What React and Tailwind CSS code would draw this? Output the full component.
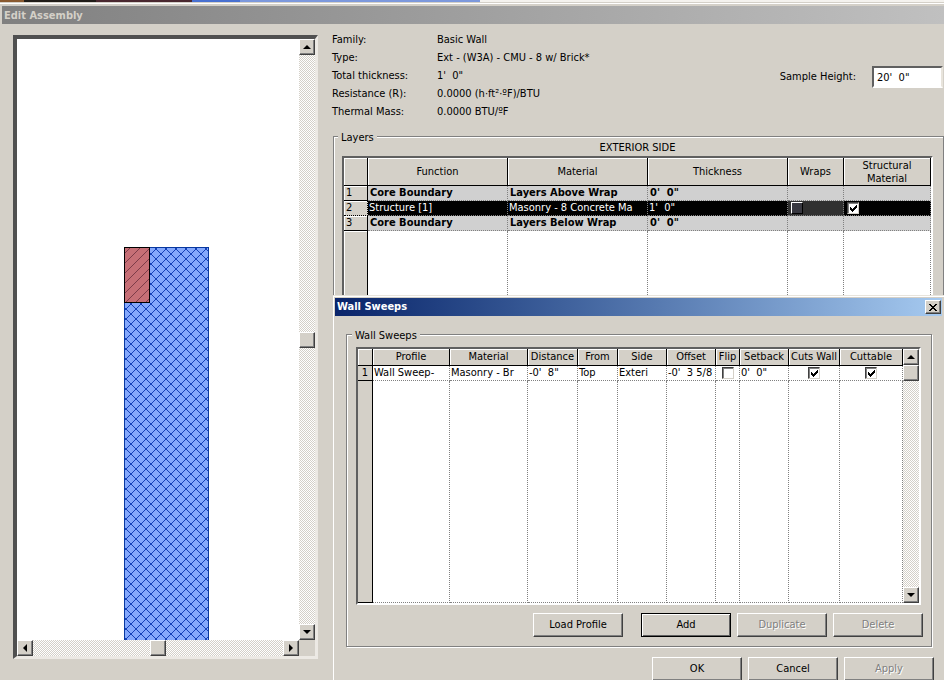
import { useState } from 'react';
import clsx from 'clsx';

const layerColumns = [
  { name: 'Function', width: 'w-[140px]' },
  { name: 'Material', width: 'w-auto' },
  { name: 'Thickness', width: 'w-[140px]' },
  { name: 'Wraps', width: 'w-[56px]' },
  { name: 'Structural Material', width: 'w-[87px]' },
];

const layers = [
  { id: 1, fn: 'Core Boundary', material: 'Layers Above Wrap', thickness: '0\'  0"', boundary: true },
  { id: 2, fn: 'Structure [1]', material: 'Masonry - 8 Concrete Ma', thickness: '1\'  0"', boundary: false },
  { id: 3, fn: 'Core Boundary', material: 'Layers Below Wrap', thickness: '0\'  0"', boundary: true },
];

const sweepColumns = [
  { name: 'Profile', width: 'w-auto' },
  { name: 'Material', width: 'w-[78px]' },
  { name: 'Distance', width: 'w-[50px]' },
  { name: 'From', width: 'w-[40px]' },
  { name: 'Side', width: 'w-[49px]' },
  { name: 'Offset', width: 'w-[49px]' },
  { name: 'Flip', width: 'w-[24px]' },
  { name: 'Setback', width: 'w-[49px]' },
  { name: 'Cuts Wall', width: 'w-[51px]' },
  { name: 'Cuttable', width: 'w-[63px]' },
];

const properties = [
  ['Family:', 'Basic Wall'],
  ['Type:', 'Ext - (W3A) - CMU - 8 w/ Brick*'],
  ['Total thickness:', '1\'  0"'],
  ['Resistance (R):', '0.0000 (h·ft²·ºF)/BTU'],
  ['Thermal Mass:', '0.0000 BTU/ºF'],
];

const raised =
  'bg-[#d4d0c8] border border-t-white border-l-white border-r-[#404040] border-b-[#404040] shadow-[inset_-1px_-1px_0_#808080]';

const sunken =
  'border-2 border-t-[#606060] border-l-[#606060] border-r-white border-b-white';

const headCell =
  'border-r border-b border-black p-0 font-normal shadow-[inset_1px_1px_0_#ffffff]';

const bodyCell = 'border-r border-b border-dotted border-[#808080] p-0';

const arrows = {
  up: 'M4 0L8 4H0z',
  down: 'M0 0H8L4 4z',
  left: 'M4 0V8L0 4z',
  right: 'M0 0L4 4L0 8z',
};

const ArrowButton = ({ dir }) => {
  const vertical = dir === 'up' || dir === 'down';
  return (
    <button type="button" aria-label={`Scroll ${dir}`} className={clsx('flex h-4 w-4 shrink-0 items-center justify-center', raised)}>
      <svg width={vertical ? 8 : 4} height={vertical ? 4 : 8} aria-hidden="true">
        <path d={arrows[dir]} />
      </svg>
    </button>
  );
};

const track = 'bg-[repeating-conic-gradient(#ffffff_0_25%,#d4d0c8_0_50%)] bg-[length:2px_2px]';

const Thumb = () => <div className={clsx('h-4 w-4 shrink-0', raised)} />;

const CheckBox = ({ label, defaultChecked = false, dark = false }) => {
  const [checked, setChecked] = useState(defaultChecked);
  return (
    <span className="relative inline-block h-3 w-3 align-top">
      <input
        type="checkbox"
        aria-label={label}
        checked={checked}
        onChange={(e) => setChecked(e.target.checked)}
        className={clsx(
          'block h-3 w-3 appearance-none border',
          dark
            ? 'border-t-white border-l-white border-r-black border-b-black bg-[#383840]'
            : 'border-t-[#404040] border-l-[#404040] border-r-[#d4d0c8] border-b-[#d4d0c8] bg-white shadow-[inset_1px_1px_0_#808080]'
        )}
      />
      {checked && (
        <svg className="pointer-events-none absolute top-0 left-0" width="12" height="12" shapeRendering="crispEdges" aria-hidden="true">
          <path d="M3 5h1v3h-1zM4 6h1v3h-1zM5 7h1v3h-1zM6 6h1v3h-1zM7 5h1v3h-1zM8 4h1v3h-1zM9 3h1v3h-1z" />
        </svg>
      )}
    </span>
  );
};

const PushButton = ({ children, disabled, isDefault }) => (
  <button
    type="button"
    disabled={disabled}
    className={clsx(
      'h-6 w-[90px]',
      isDefault
        ? 'border border-black bg-[#d4d0c8] shadow-[inset_1px_1px_0_#ffffff,inset_-1px_-1px_0_#606060]'
        : raised,
      disabled && 'text-[#808080] [text-shadow:1px_1px_0_#ffffff]'
    )}
  >
    {children}
  </button>
);

const GroupBox = ({ title, className, children }) => (
  <fieldset
    className={clsx(
      'border border-[#808080] shadow-[inset_1px_1px_0_#ffffff,1px_1px_0_#ffffff]',
      className
    )}
  >
    <legend className="-ml-1 bg-[#d4d0c8] px-[3px] pt-[3px] leading-[10px]">{title}</legend>
    {children}
  </fieldset>
);

// Section view of the wall: CMU body with a brick sweep at the top left
const WallPreview = () => (
  <svg
    className="block h-full min-h-0 w-full min-w-0 bg-white"
    viewBox="0 0 282 601"
    preserveAspectRatio="xMidYMax slice"
    shapeRendering="crispEdges"
    role="img"
    aria-label="Wall section"
  >
    <defs>
      <pattern id="cmu" width="10" height="10" patternUnits="userSpaceOnUse" patternTransform="translate(4 5)">
        <rect width="10" height="10" fill="#84a8fc" />
        <path d="M-1 -1L11 11M11 -1L-1 11" stroke="#1440b8" />
      </pattern>
      <pattern id="brick" width="10" height="10" patternUnits="userSpaceOnUse" patternTransform="translate(0 2)">
        <rect width="10" height="10" fill="#c66f76" />
        <path d="M11 -1L-1 11" stroke="#7c3c48" />
      </pattern>
    </defs>
    <rect x="107.5" y="208.5" width="84" height="400" fill="url(#cmu)" stroke="#0838a0" />
    <rect x="107.5" y="208.5" width="25" height="55" fill="url(#brick)" stroke="#000000" />
  </svg>
);

const PreviewPanel = () => (
  <div className="flex w-[305px] shrink-0 border-4 border-t-[#505050] border-l-[#505050] border-r-[#ece9e4] border-b-[#ece9e4] border-r-[3px] border-b-[3px]">
    <div className="flex min-w-0 flex-1 flex-col">
      <div className="min-h-0 flex-1">
        <WallPreview />
      </div>
      <div className={clsx('flex h-4 shrink-0 justify-between', track)}>
        <ArrowButton dir="left" />
        <Thumb />
        <ArrowButton dir="right" />
      </div>
    </div>
    <div className="flex flex-col bg-[#d4d0c8]">
      <div className={clsx('flex flex-1 flex-col justify-between', track)}>
        <ArrowButton dir="up" />
        <Thumb />
        <ArrowButton dir="down" />
      </div>
      <div className="h-4 w-4" />
    </div>
  </div>
);

const LayersTable = () => (
  <table className="w-full table-fixed border-separate border-spacing-0 bg-white text-left">
    <colgroup>
      <col className="w-[24px]" />
      {layerColumns.map((col) => (
        <col key={col.name} className={col.width} />
      ))}
    </colgroup>
    <thead className="bg-[#d4d0c8]">
      <tr className="h-7 text-center leading-[13px]">
        <th className={headCell} aria-label="Row" />
        {layerColumns.map((col) => (
          <th key={col.name} className={clsx(headCell, 'px-3')}>{col.name}</th>
        ))}
      </tr>
    </thead>
    <tbody className="leading-[14px] whitespace-pre">
      {layers.map((layer) => {
        const selected = !layer.boundary;
        const cell = clsx(bodyCell, 'h-[15px] overflow-hidden', layer.boundary ? 'pl-[2px] font-bold' : 'pl-px');
        return (
          <tr key={layer.id} className={selected ? 'bg-black text-white' : 'bg-[#d0d0d0]'}>
            <th
              className={clsx(
                'border-r border-b border-black bg-[#d4d0c8] p-0 pl-[2px] font-normal text-black shadow-[inset_1px_1px_0_#ffffff]',
                selected && 'border-dotted'
              )}
            >
              {layer.id}
            </th>
            <td className={cell}>{layer.fn}</td>
            <td className={cell}>{layer.material}</td>
            <td className={clsx(cell, 'pl-[2px]')}>{layer.thickness}</td>
            <td className={clsx(bodyCell, 'pl-[3px] leading-none', selected && 'bg-[#303030]')}>
              {selected && <CheckBox label="Wraps" dark />}
            </td>
            <td className={clsx(bodyCell, 'pl-[3px] leading-none')}>
              {selected && <CheckBox label="Structural Material" defaultChecked />}
            </td>
          </tr>
        );
      })}
      <tr className="h-[120px]">
        <td className="border-r border-black bg-[#d4d0c8] p-0 shadow-[inset_1px_1px_0_#ffffff]" />
        {layerColumns.map((col) => (
          <td key={col.name} className={bodyCell} />
        ))}
      </tr>
    </tbody>
  </table>
);

const SweepsTable = () => (
  <table className="min-w-0 flex-1 table-fixed border-separate border-spacing-0 bg-white text-left">
    <colgroup>
      <col className="w-[15px]" />
      {sweepColumns.map((col) => (
        <col key={col.name} className={col.width} />
      ))}
    </colgroup>
    <thead className="bg-[#d4d0c8]">
      <tr className="h-[17px] text-center leading-[14px] whitespace-nowrap">
        <th className={headCell} aria-label="Row" />
        {sweepColumns.map((col) => (
          <th key={col.name} className={headCell}>{col.name}</th>
        ))}
      </tr>
    </thead>
    <tbody className="leading-[14px] whitespace-pre">
      <tr>
        <th className="h-[15px] border-r border-b border-black bg-[#d4d0c8] p-0 text-center font-normal">1</th>
        {['Wall Sweep-', 'Masonry - Br', '-0\'  8"', 'Top', 'Exteri', '-0\'  3 5/8'].map((value) => (
          <td key={value} className={clsx(bodyCell, 'overflow-hidden pl-px')}>{value}</td>
        ))}
        <td className={clsx(bodyCell, 'text-center leading-none')}>
          <CheckBox label="Flip" />
        </td>
        <td className={clsx(bodyCell, 'pl-px')}>{'0\'  0"'}</td>
        <td className={clsx(bodyCell, 'text-center leading-none')}>
          <CheckBox label="Cuts Wall" defaultChecked />
        </td>
        <td className={clsx(bodyCell, 'text-center leading-none')}>
          <CheckBox label="Cuttable" defaultChecked />
        </td>
      </tr>
      <tr className="h-[222px]">
        <td className="border-r border-b border-black bg-[#d4d0c8] p-0" />
        {sweepColumns.map((col) => (
          <td key={col.name} className={bodyCell} />
        ))}
      </tr>
    </tbody>
  </table>
);

const WallSweepsDialog = () => (
  <section
    role="dialog"
    aria-labelledby="sweeps-title"
    className="absolute top-[295px] right-0 left-[333px] border-t border-[#e8e4dc] bg-[#d4d0c8]"
  >
    <div className="border-t border-l border-white p-px pr-0.5">
      <header className="flex h-[18px] items-center justify-between bg-linear-to-r from-[#0a246a] to-[#a6caf0] pr-px pl-0.5">
        <h2 id="sweeps-title" className="font-bold text-white">Wall Sweeps</h2>
        <button type="button" aria-label="Close" className={clsx('flex h-[14px] w-4 items-center justify-center', raised)}>
          <svg width="8" height="7" shapeRendering="crispEdges" aria-hidden="true">
            <path d="M0 0h2v1h1v1h2v-1h1v-1h2v1h-1v1h-1v1h-1v1h1v1h1v1h1v1h-2v-1h-1v-1h-2v1h-1v1h-2v-1h1v-1h1v-1h1v-1h-1v-1h-1v-1h-1z" />
          </svg>
        </button>
      </header>

      <GroupBox title="Wall Sweeps" className="mt-3 mr-2.5 ml-[11px] pr-2 pb-[9px] pl-[9px]">
        <div className={clsx('mt-1.5 mr-0.5 flex', sunken)}>
          <SweepsTable />
          <div className={clsx('flex flex-col', track)}>
            <ArrowButton dir="up" />
            <Thumb />
            <div className="flex-1" />
            <ArrowButton dir="down" />
          </div>
        </div>
        <div className="mt-2 flex justify-end gap-1.5">
          <div className="mr-3">
            <PushButton>Load Profile</PushButton>
          </div>
          <PushButton isDefault>Add</PushButton>
          <PushButton disabled>Duplicate</PushButton>
          <PushButton disabled>Delete</PushButton>
        </div>
      </GroupBox>

      <footer className="mt-2.5 mr-2 flex justify-end gap-1.5">
        <PushButton>OK</PushButton>
        <PushButton>Cancel</PushButton>
        <PushButton disabled>Apply</PushButton>
      </footer>
    </div>
  </section>
);

export default function App() {
  const [height, setHeight] = useState('20\'  0"');

  return (
    <div className="relative flex h-screen flex-col overflow-hidden bg-[#d4d0c8] font-['DejaVu_Sans_Condensed','DejaVu_Sans',sans-serif] text-[11px] leading-[14px] text-black">
      {/* Sliver of the window behind */}
      <div className="flex h-0.5 shrink-0">
        <div className="w-6 bg-[#8a5a30]" />
        <div className="w-[72px] bg-[#201c18]" />
        <div className="w-24 bg-[#4a2830]" />
        <div className="w-12 bg-[#4870d0]" />
        <div className="w-60 bg-[#7c98dc]" />
        <div className="flex-1 bg-[#f4f2ee]" />
      </div>

      <header className="mt-px flex h-[21px] shrink-0 items-end border-t border-white pl-0.5">
        <h1 className="h-[18px] flex-1 bg-linear-to-r from-[#808080] to-[#c0c0c0] pl-0.5 leading-[19px] font-bold text-[#d4d0c8]">
          Edit Assembly
        </h1>
      </header>

      <main className="flex min-h-0 flex-1 pt-[11px] pb-[21px] pl-[13px]">
        <PreviewPanel />

        <div className="-mt-1 ml-3.5 min-w-0 flex-1">
          <div className="mb-[9px] flex justify-between">
            <dl className="grid grid-cols-[105px_auto] leading-[18px] whitespace-pre">
              {properties.map(([name, value]) => (
                <div key={name} className="col-span-2 grid grid-cols-subgrid">
                  <dt>{name}</dt>
                  <dd>{value}</dd>
                </div>
              ))}
            </dl>
            <div className="mt-[35px] mr-px flex h-[22px] items-center">
              <label htmlFor="sample-height" className="mr-4">Sample Height:</label>
              <input
                id="sample-height"
                value={height}
                onChange={(e) => setHeight(e.target.value)}
                className="h-[22px] w-[71px] border-2 border-t-[#606060] border-l-[#606060] border-r-[#e8e4dc] border-b-white bg-white px-[3px] whitespace-pre outline-none"
              />
            </div>
          </div>

          <GroupBox title="Layers" className="ml-px pr-[10px] pl-2">
            <p className="pb-[3px] text-center leading-[10px]">EXTERIOR SIDE</p>
            <div className={sunken}>
              <LayersTable />
            </div>
          </GroupBox>
        </div>
      </main>

      <WallSweepsDialog />
    </div>
  );
}
